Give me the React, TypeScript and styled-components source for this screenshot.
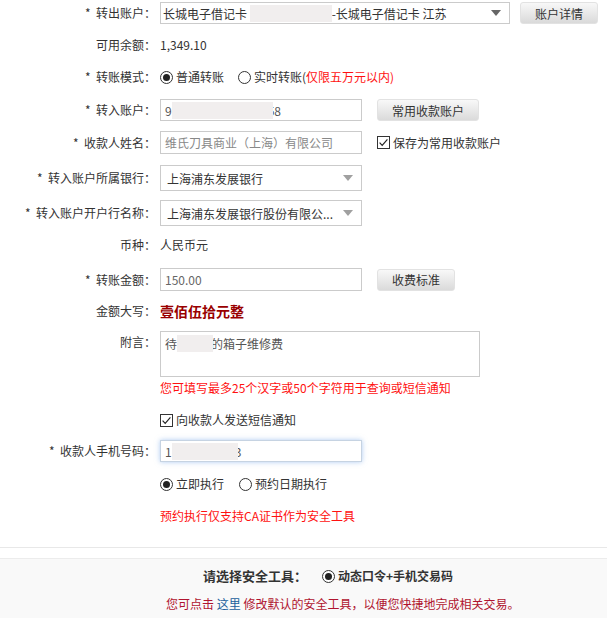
import React from "react";
import styled, { createGlobalStyle } from "styled-components";

const Global = createGlobalStyle`
  html, body { margin: 0; padding: 0; background: #fff; }
  body {
    font-family: "Noto Sans CJK SC", "Microsoft YaHei", "Noto Sans", sans-serif;
    font-size: 12px;
    color: #333;
  }
`;

const Page = styled.div`
  width: 607px;
  height: 618px;
  overflow: hidden;
  display: flex;
  flex-direction: column;
`;

const Form = styled.div`
  display: flex;
  flex-direction: column;
`;

const Row = styled.div<{ $mt: number; $top?: boolean }>`
  display: flex;
  align-items: ${(p) => (p.$top ? "flex-start" : "center")};
  margin-top: ${(p) => p.$mt}px;
  min-height: 22px;
`;

const Label = styled.div`
  width: 156px;
  flex: none;
  padding-right: 4px;
  text-align: right;
  white-space: nowrap;
  line-height: 22px;
`;

const Value = styled.div`
  line-height: 22px;
  white-space: nowrap;
`;

const BigValue = styled.div`
  font-size: 14px;
  font-weight: bold;
  color: #990000;
  line-height: 22px;
`;

const Select = styled.div<{ $w: number; $h: number; $arrow: string; $pl: number }>`
  width: ${(p) => p.$w}px;
  height: ${(p) => p.$h}px;
  box-sizing: border-box;
  border: 1px solid #cbcbcb;
  background: #fff;
  display: flex;
  align-items: center;
  padding: 0 8px 0 ${(p) => p.$pl}px;
  white-space: nowrap;
  color: #333;
  &::after {
    content: "";
    margin-left: auto;
    border-left: 5px solid transparent;
    border-right: 5px solid transparent;
    border-top: 6px solid ${(p) => p.$arrow};
  }
`;

const Input = styled.div<{ $w: number; $h: number; $color?: string; $focus?: boolean }>`
  width: ${(p) => p.$w}px;
  height: ${(p) => p.$h}px;
  box-sizing: border-box;
  border: 1px solid ${(p) => (p.$focus ? "#c6d3e2" : "#cbcbcb")};
  background: #fff;
  display: flex;
  align-items: center;
  padding: 0 4px;
  white-space: nowrap;
  color: ${(p) => p.$color ?? "#555"};
  box-shadow: ${(p) => (p.$focus ? "0 0 5px rgba(110, 160, 230, 0.55)" : "none")};
`;

const TextArea = styled.div`
  width: 320px;
  height: 46px;
  box-sizing: border-box;
  border: 1px solid #cbcbcb;
  background: #fff;
  padding: 3px 4px;
  line-height: 18px;
  color: #555;
  display: flex;
  align-items: flex-start;
  white-space: nowrap;
`;

const Blank = styled.span<{ $w: number; $over?: number }>`
  display: inline-block;
  width: ${(p) => p.$w}px;
  height: 17px;
  background: #f1eeee;
  margin-right: ${(p) => -(p.$over ?? 0)}px;
  position: relative;
  z-index: 1;
`;

const Button = styled.button<{ $w: number; $ml: number }>`
  width: ${(p) => p.$w}px;
  height: 22px;
  margin-left: ${(p) => p.$ml}px;
  border: 1px solid #e2e2e2;
  border-radius: 3px;
  background: linear-gradient(#f8f8f8, #dadada);
  font-family: inherit;
  font-size: 12px;
  color: #333;
  padding: 0;
  cursor: pointer;
`;

const Choice = styled.label<{ $ml?: number; $bold?: boolean }>`
  display: inline-flex;
  align-items: center;
  margin-left: ${(p) => p.$ml ?? 0}px;
  gap: 3px;
  font-weight: ${(p) => (p.$bold ? "bold" : "normal")};
  white-space: nowrap;
  line-height: 22px;
`;

const RadioDot = styled.span<{ $on?: boolean }>`
  width: 13px;
  height: 13px;
  box-sizing: border-box;
  border-radius: 50%;
  border: 1px solid #333;
  background: #fff;
  display: inline-flex;
  align-items: center;
  justify-content: center;
  &::after {
    content: "";
    width: 7px;
    height: 7px;
    border-radius: 50%;
    background: ${(p) => (p.$on ? "#222" : "transparent")};
  }
`;

const Red = styled.span`
  color: #ff1111;
`;

const Hint = styled.div<{ $mt: number }>`
  margin-top: ${(p) => p.$mt}px;
  margin-left: 160px;
  color: #ff1111;
  line-height: 16px;
  white-space: nowrap;
`;

const Divider = styled.div`
  margin-top: 23px;
  height: 1px;
  background: #e8e8e8;
`;

const Footer = styled.div`
  margin-top: 10px;
  flex: 1;
  border-top: 1px solid #ececec;
  background: #f9f9f9;
  display: flex;
  flex-direction: column;
  padding-top: 6px;
`;

const ToolRow = styled.div`
  display: flex;
  align-items: center;
  padding-left: 203px;
  line-height: 18px;
`;

const ToolTitle = styled.span`
  font-size: 13px;
  font-weight: bold;
  color: #333;
  margin-right: 15px;
`;

const Notice = styled.div`
  margin-top: 8px;
  padding-left: 166px;
  color: #b0142f;
  line-height: 18px;
  white-space: nowrap;
`;

const Link = styled.a`
  color: #1b5f9c;
  text-decoration: none;
`;

const Check = () => (
  <svg width="13" height="13" viewBox="0 0 13 13">
    <rect x="0.5" y="0.5" width="12" height="12" fill="#fff" stroke="#333" />
    <path d="M2.6 6.6 L5.2 9.3 L10.4 3.4" fill="none" stroke="#222" strokeWidth="1.2" />
  </svg>
);

export default function App() {
  return (
    <Page>
      <Global />
      <Form>
        <Row $mt={2}>
          <Label>*&nbsp;&nbsp;转出账户：</Label>
          <Select $w={350} $h={22} $arrow="#666" $pl={2}>
            长城电子借记卡&nbsp;<Blank $w={82} />-长城电子借记卡 江苏
          </Select>
          <Button $w={78} $ml={10}>账户详情</Button>
        </Row>
        <Row $mt={10}>
          <Label>可用余额：</Label>
          <Value>1,349.10</Value>
        </Row>
        <Row $mt={10}>
          <Label>*&nbsp;&nbsp;转账模式：</Label>
          <Choice>
            <RadioDot $on />
            <span>普通转账</span>
          </Choice>
          <Choice $ml={14}>
            <RadioDot />
            <span>
              实时转账(<Red>仅限五万元以内)</Red>
            </span>
          </Choice>
        </Row>
        <Row $mt={11}>
          <Label>*&nbsp;&nbsp;转入账户：</Label>
          <Input $w={202} $h={22} $color="#555">
            9<Blank $w={101} $over={5} />58
          </Input>
          <Button $w={102} $ml={15}>常用收款账户</Button>
        </Row>
        <Row $mt={10}>
          <Label>*&nbsp;&nbsp;收款人姓名：</Label>
          <Input $w={202} $h={23} $color="#888">维氏刀具商业（上海）有限公司</Input>
          <Choice $ml={15}>
            <Check />
            <span>保存为常用收款账户</span>
          </Choice>
        </Row>
        <Row $mt={11}>
          <Label>*&nbsp;&nbsp;转入账户所属银行：</Label>
          <Select $w={202} $h={26} $arrow="#a0a0a0" $pl={6}>
            上海浦东发展银行
          </Select>
        </Row>
        <Row $mt={9}>
          <Label>*&nbsp;&nbsp;转入账户开户行名称：</Label>
          <Select $w={202} $h={26} $arrow="#a0a0a0" $pl={6}>
            上海浦东发展银行股份有限公...
          </Select>
        </Row>
        <Row $mt={8}>
          <Label>币种：</Label>
          <Value>人民币元</Value>
        </Row>
        <Row $mt={12}>
          <Label>*&nbsp;&nbsp;转账金额：</Label>
          <Input $w={202} $h={23} $color="#666">150.00</Input>
          <Button $w={78} $ml={15}>收费标准</Button>
        </Row>
        <Row $mt={9}>
          <Label>金额大写：</Label>
          <BigValue>壹佰伍拾元整</BigValue>
        </Row>
        <Row $mt={9} $top>
          <Label>附言：</Label>
          <TextArea>
            待<Blank $w={36} $over={2} />的箱子维修费
          </TextArea>
        </Row>
        <Hint $mt={3}>您可填写最多25个汉字或50个字符用于查询或短信通知</Hint>
        <Row $mt={13}>
          <Label />
          <Choice>
            <Check />
            <span>向收款人发送短信通知</span>
          </Choice>
        </Row>
        <Row $mt={9}>
          <Label>*&nbsp;&nbsp;收款人手机号码：</Label>
          <Input $w={202} $h={22} $color="#555" $focus>
            1<Blank $w={66} $over={3} />3
          </Input>
        </Row>
        <Row $mt={11}>
          <Label />
          <Choice>
            <RadioDot $on />
            <span>立即执行</span>
          </Choice>
          <Choice $ml={15}>
            <RadioDot />
            <span>预约日期执行</span>
          </Choice>
        </Row>
        <Hint $mt={13}>预约执行仅支持CA证书作为安全工具</Hint>
      </Form>
      <Divider />
      <Footer>
        <ToolRow>
          <ToolTitle>请选择安全工具：</ToolTitle>
          <Choice $bold>
            <RadioDot $on />
            <span>动态口令+手机交易码</span>
          </Choice>
        </ToolRow>
        <Notice>
          您可点击 <Link href="#">这里</Link> 修改默认的安全工具，以便您快捷地完成相关交易。
        </Notice>
      </Footer>
    </Page>
  );
}
